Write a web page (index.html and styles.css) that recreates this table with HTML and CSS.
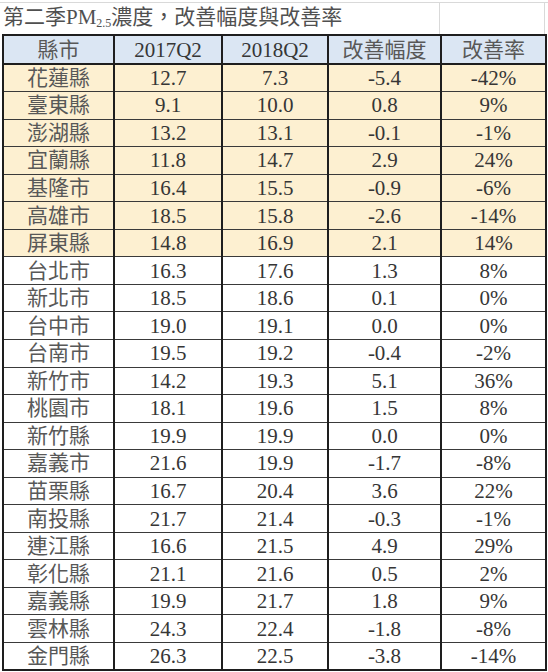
FILE: index.html
```html
<!DOCTYPE html>
<html lang="zh-Hant">
<head>
<meta charset="utf-8">
<title>第二季PM2.5濃度，改善幅度與改善率</title>
<link rel="stylesheet" href="styles.css">
</head>
<body>
<div class="sheet">
  <div class="title-row">
    <div class="title-cell"><span class="title">第二季PM<sub>2.5</sub>濃度，改善幅度與改善率</span></div>
    <div class="grid-cell"></div>
  </div>
  <table class="data">
    <colgroup>
      <col class="c1"><col class="c2"><col class="c3"><col class="c4"><col class="c5">
    </colgroup>
    <thead>
      <tr class="head"><th class="cjk">縣市</th><th>2017Q2</th><th>2018Q2</th><th class="cjk">改善幅度</th><th class="cjk">改善率</th></tr>
    </thead>
    <tbody>
      <tr class="hl"><td>花蓮縣</td><td>12.7</td><td>7.3</td><td>-5.4</td><td>-42%</td></tr>
      <tr class="hl"><td>臺東縣</td><td>9.1</td><td>10.0</td><td>0.8</td><td>9%</td></tr>
      <tr class="hl"><td>澎湖縣</td><td>13.2</td><td>13.1</td><td>-0.1</td><td>-1%</td></tr>
      <tr class="hl"><td>宜蘭縣</td><td>11.8</td><td>14.7</td><td>2.9</td><td>24%</td></tr>
      <tr class="hl"><td>基隆市</td><td>16.4</td><td>15.5</td><td>-0.9</td><td>-6%</td></tr>
      <tr class="hl"><td>高雄市</td><td>18.5</td><td>15.8</td><td>-2.6</td><td>-14%</td></tr>
      <tr class="hl"><td>屏東縣</td><td>14.8</td><td>16.9</td><td>2.1</td><td>14%</td></tr>
      <tr><td>台北市</td><td>16.3</td><td>17.6</td><td>1.3</td><td>8%</td></tr>
      <tr><td>新北市</td><td>18.5</td><td>18.6</td><td>0.1</td><td>0%</td></tr>
      <tr><td>台中市</td><td>19.0</td><td>19.1</td><td>0.0</td><td>0%</td></tr>
      <tr><td>台南市</td><td>19.5</td><td>19.2</td><td>-0.4</td><td>-2%</td></tr>
      <tr><td>新竹市</td><td>14.2</td><td>19.3</td><td>5.1</td><td>36%</td></tr>
      <tr><td>桃園市</td><td>18.1</td><td>19.6</td><td>1.5</td><td>8%</td></tr>
      <tr><td>新竹縣</td><td>19.9</td><td>19.9</td><td>0.0</td><td>0%</td></tr>
      <tr><td>嘉義市</td><td>21.6</td><td>19.9</td><td>-1.7</td><td>-8%</td></tr>
      <tr><td>苗栗縣</td><td>16.7</td><td>20.4</td><td>3.6</td><td>22%</td></tr>
      <tr><td>南投縣</td><td>21.7</td><td>21.4</td><td>-0.3</td><td>-1%</td></tr>
      <tr><td>連江縣</td><td>16.6</td><td>21.5</td><td>4.9</td><td>29%</td></tr>
      <tr><td>彰化縣</td><td>21.1</td><td>21.6</td><td>0.5</td><td>2%</td></tr>
      <tr><td>嘉義縣</td><td>19.9</td><td>21.7</td><td>1.8</td><td>9%</td></tr>
      <tr><td>雲林縣</td><td>24.3</td><td>22.4</td><td>-1.8</td><td>-8%</td></tr>
      <tr><td>金門縣</td><td>26.3</td><td>22.5</td><td>-3.8</td><td>-14%</td></tr>
    </tbody>
  </table>
</div>
</body>
</html>
```
FILE: styles.css
```css
html, body {
  margin: 0;
  padding: 0;
  background: #ffffff;
}

.sheet {
  width: 548px;
  height: 672px;
  overflow: hidden;
  font-family: "Liberation Serif", "Noto Sans CJK TC", serif;
  color: #333333;
}

.title-row {
  display: flex;
  height: 32px;
  margin-top: 2px;
  border-top: 1px solid #d9d9d9;
  box-sizing: border-box;
}

.title-cell {
  width: 439px;
  flex: none;
}

.title {
  display: block;
  white-space: nowrap;
  font-size: 21px;
  line-height: 29px;
  padding-left: 3px;
  color: #505050;
}

.title sub {
  font-size: 12px;
  line-height: 0;
  vertical-align: -3px;
}

.grid-cell {
  width: 104px;
  flex: none;
  border-left: 1px solid #d9d9d9;
  border-right: 1px solid #d9d9d9;
}

.data {
  border-collapse: collapse;
  table-layout: fixed;
  width: 543px;
  margin-left: 2px;
  border: 2px solid #1e1e1e;
}

.c1 { width: 111px; }
.c2 { width: 108px; }
.c3 { width: 106px; }
.c4 { width: 113px; }
.c5 { width: 105px; }

.data th,
.data td {
  padding: 0;
  text-align: center;
  font-size: 21px;
  font-weight: normal;
  line-height: 22px;
  border-left: 2px solid #1e1e1e;
  border-right: 2px solid #1e1e1e;
  border-top: 1px solid #3a3a3a;
  border-bottom: 1px solid #3a3a3a;
  color: #363636;
}

.head th {
  height: 27px;
  background: #dbe6f3;
  border-bottom: 2px solid #1e1e1e;
}

.data th.cjk,
.data td:first-child {
  color: #585858;
}

.data tbody tr {
  height: 27.55px;
}

.data tbody tr.hl td {
  background: #fdf0d1;
}
```
